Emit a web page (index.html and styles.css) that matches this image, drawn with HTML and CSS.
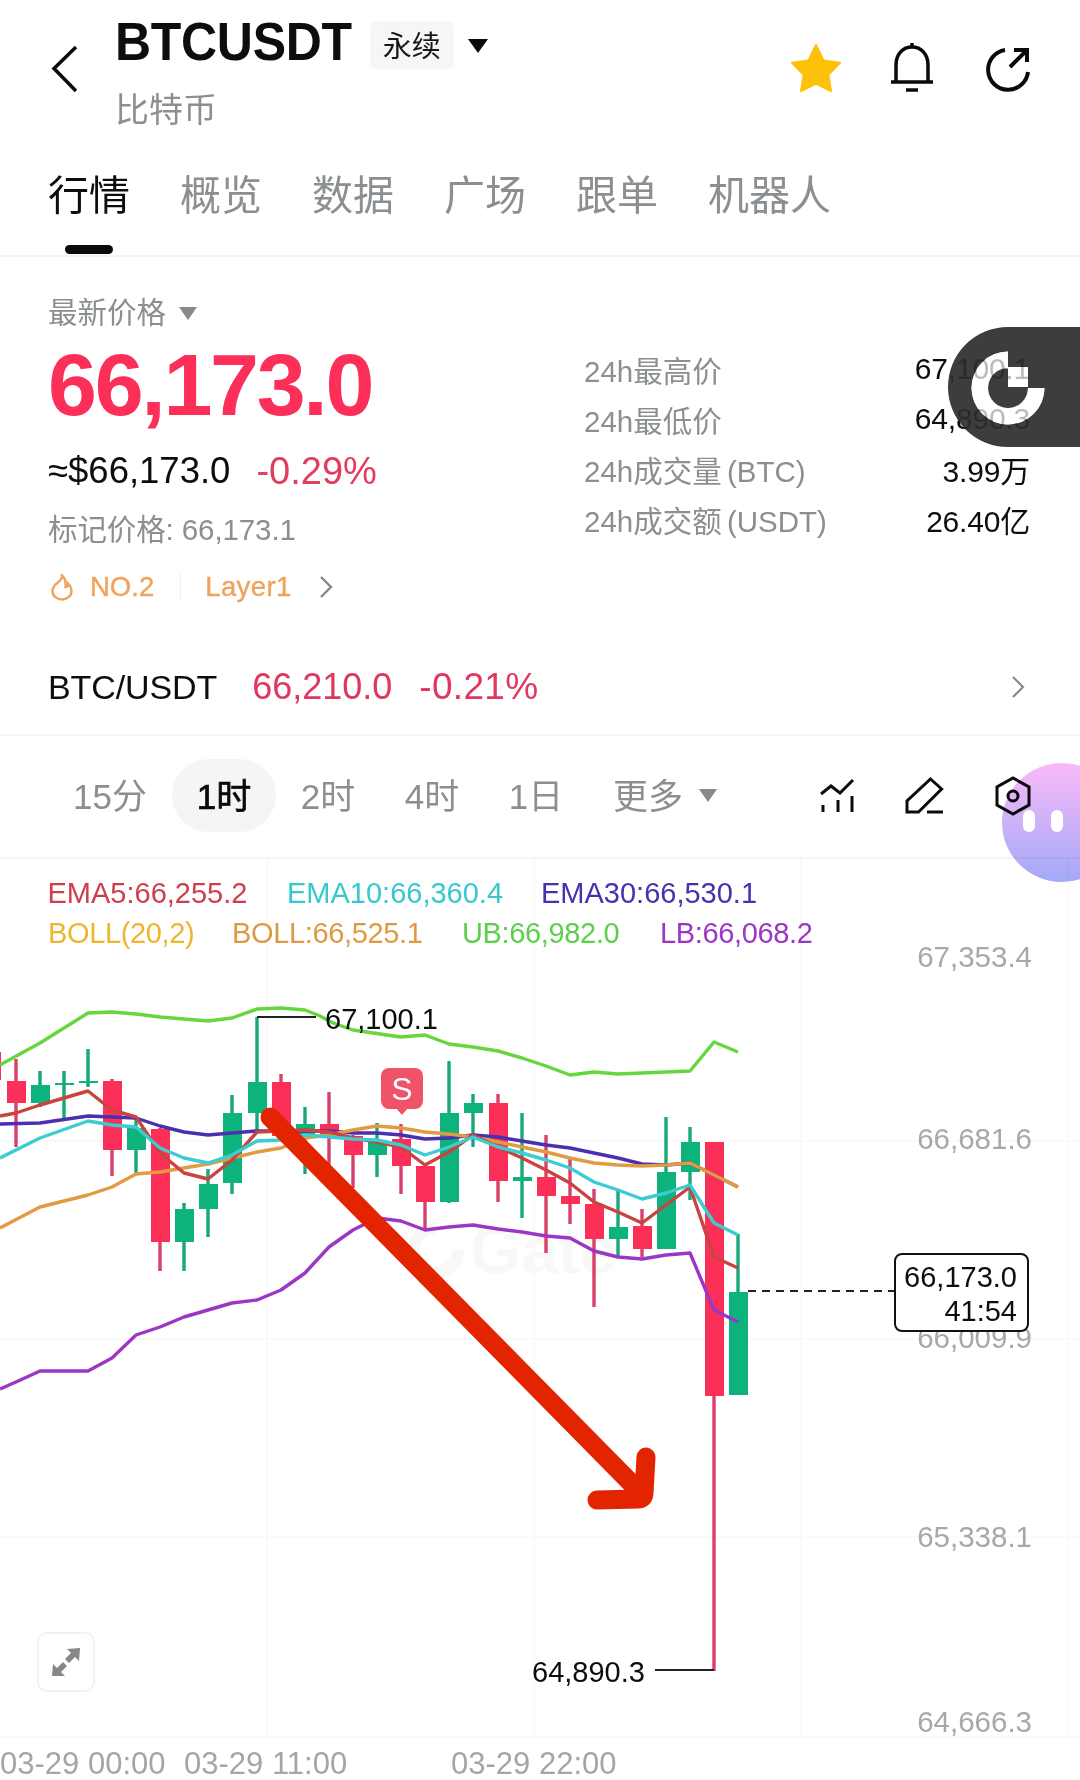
FILE: index.html
```html
<!DOCTYPE html>
<html lang="zh">
<head>
<meta charset="utf-8">
<title>BTCUSDT</title>
<link rel="stylesheet" href="styles.css">
</head>
<body>
<div class="app">
  <header class="topbar">
    <svg class="back" width="28" height="48" viewBox="0 0 28 48"><path class="ic" d="M25 2 3 23.500 25 46"/></svg>
    <div class="title-block">
      <div class="title-row">
        <h1 class="symbol">BTCUSDT</h1>
        <span class="pill-type">永续</span>
        <i class="caret caret-black"></i>
      </div>
      <div class="coin-name">比特币</div>
    </div>
    <div class="top-icons">
      <svg class="star" width="52" height="50" viewBox="0 0 52 50"><path d="M26 2 33.500 17.500 50 19.800 38.300 31.800 41 48 26 40.500 11 48 13.700 31.800 2 19.800 18.500 17.500Z"/></svg>
      <svg class="bell" width="46" height="52" viewBox="0 0 46 52"><path class="ic" d="M7 41V24C7 13 14 6 23 6S39 13 39 24V41M2 41H44M17 49H29M23 2V6"/></svg>
      <svg class="share" width="50" height="48" viewBox="0 0 50 48"><path class="ic ic-bold" d="M24 4A20 20 0 1 0 47 26M29 21 45 5M33 4H46V16"/></svg>
    </div>
  </header>

  <nav class="tabs">
    <a class="tab tab-active">行情</a>
    <a class="tab">概览</a>
    <a class="tab">数据</a>
    <a class="tab">广场</a>
    <a class="tab">跟单</a>
    <a class="tab">机器人</a>
  </nav>

  <section class="market">
    <div class="stats">
      <div class="stats-left">
        <div class="latest"><span>最新价格</span><i class="caret caret-gray"></i></div>
        <div class="price">66,173.0</div>
        <div class="usd-row"><span class="usd">≈$66,173.0</span><span class="chg">-0.29%</span></div>
        <div class="mark">标记价格: 66,173.1</div>
        <div class="tags">
          <svg class="flame" width="22" height="27" viewBox="0 0 22 27"><path d="M11 1.500C12 6 7 8 4 11 1.500 13.500 1.500 16 1.500 17.500 1.500 22 6 25.500 11 25.500S20.500 22 20.500 17.500C20.500 14 19 11.500 17 9.500 17 12 15.500 13 14.500 13 15 8.500 14 4 11 1.500Z"/></svg>
          <span class="tag-text">NO.2</span>
          <span class="tag-sep"></span>
          <span class="tag-text">Layer1</span>
          <svg class="tag-chev" width="14" height="24" viewBox="0 0 14 24"><path d="M2 2 12 12 2 22"/></svg>
        </div>
      </div>
      <dl class="stats-right">
        <div class="kv"><dt>24h最高价</dt><dd>67,100.1</dd></div>
        <div class="kv"><dt>24h最低价</dt><dd>64,890.3</dd></div>
        <div class="kv"><dt>24h成交量 (BTC)</dt><dd>3.99万</dd></div>
        <div class="kv"><dt>24h成交额 (USDT)</dt><dd>26.40亿</dd></div>
      </dl>
    </div>
    <div class="spot">
      <span class="spot-name">BTC/USDT</span>
      <span class="spot-price">66,210.0</span>
      <span class="spot-chg">-0.21%</span>
      <svg class="spot-chev" width="14" height="24" viewBox="0 0 14 24"><path d="M2 2 12 12 2 22"/></svg>
    </div>
  </section>

  <div class="toolbar">
    <span class="period period-first">15分</span>
    <span class="period period-active">1时</span>
    <span class="period">2时</span>
    <span class="period">4时</span>
    <span class="period">1日</span>
    <span class="period period-more">更多</span>
    <i class="caret caret-gray"></i>
    <div class="tools">
      <svg width="36" height="36" viewBox="0 0 36 36"><path class="tool" d="M2 16 12 8 21 15 34 2M4 27V34M19 22V34M33 18V34"/></svg>
      <svg width="40" height="38" viewBox="0 0 40 38"><path class="tool" d="M25.500 2 36.600 12 13.500 35H2V24ZM22 35H38"/></svg>
      <svg width="36" height="40" viewBox="0 0 36 40"><path class="tool" d="M18 2 34 11V29L18 38 2 29V11Z"/><circle class="tool" cx="18" cy="20" r="5"/></svg>
    </div>
  </div>

  <svg class="chart" width="1080" height="921" viewBox="0 859 1080 921">
    <g class="grid">
      <path d="M267 859V1737M534 859V1737M801 859V1737M1068 859V1737"/>
      <path d="M0 1141H1080M0 1339H1080M0 1537H1080M0 1737H1080"/>
    </g>
    <g class="wm">
      <path class="wm-ring" d="M436 1228A22 22 0 1 0 458 1250"/>
      <text x="470" y="1273" class="wm-text">Gate</text>
    </g>

    <g class="legend">
      <text x="47.500" y="903" class="c-ema5">EMA5:66,255.2</text>
      <text x="287" y="903" class="c-ema10">EMA10:66,360.4</text>
      <text x="541" y="903" class="c-ema30">EMA30:66,530.1</text>
      <text x="48" y="943" class="c-boll2 tight">BOLL(20,2)</text>
      <text x="232" y="943" class="c-boll tight">BOLL:66,525.1</text>
      <text x="462" y="943" class="c-ub tight">UB:66,982.0</text>
      <text x="660" y="943" class="c-lb tight">LB:66,068.2</text>
    </g>
    <g class="axis">
      <text x="1032" y="967">67,353.4</text>
      <text x="1032" y="1149">66,681.6</text>
      <text x="1032" y="1348">66,009.9</text>
      <text x="1032" y="1547">65,338.1</text>
      <text x="1032" y="1732">64,666.3</text>
    </g>
    <g class="axis-x">
      <text x="0" y="1774">03-29 00:00</text>
      <text x="184" y="1774">03-29 11:00</text>
      <text x="451" y="1774">03-29 22:00</text>
    </g>

    <g class="candles">
      <path class="w-dn" d="M-8 1040V1090"/><rect class="dn" x="-18" y="1052" width="19" height="28"/>
      <path class="w-dn" d="M16 1059V1147"/><rect class="dn" x="7" y="1081" width="19" height="22"/>
      <path class="w-up" d="M40 1071V1107"/><rect class="up" x="31" y="1085" width="19" height="18"/>
      <path class="w-up" d="M64 1071V1118"/><rect class="up" x="55" y="1083" width="19" height="2"/>
      <path class="w-up" d="M88 1049V1087"/><rect class="up" x="79" y="1081" width="19" height="2"/>
      <path class="w-dn" d="M112 1079V1176"/><rect class="dn" x="103" y="1081" width="19" height="69"/>
      <path class="w-up" d="M136 1118V1174"/><rect class="up" x="127" y="1128" width="19" height="22"/>
      <path class="w-dn" d="M160 1128V1271"/><rect class="dn" x="151" y="1129" width="19" height="113"/>
      <path class="w-up" d="M184 1203V1271"/><rect class="up" x="175" y="1209" width="19" height="33"/>
      <path class="w-up" d="M208 1169V1237"/><rect class="up" x="199" y="1184" width="19" height="25"/>
      <path class="w-up" d="M232 1095V1194"/><rect class="up" x="223" y="1113" width="19" height="70"/>
      <path class="w-up" d="M257 1017V1130"/><rect class="up" x="248" y="1082" width="19" height="31"/>
      <path class="w-dn" d="M281 1074V1136"/><rect class="dn" x="272" y="1082" width="19" height="54"/>
      <path class="w-up" d="M305 1107V1174"/><rect class="up" x="296" y="1124" width="19" height="14"/>
      <path class="w-dn" d="M329 1092V1165"/><rect class="dn" x="320" y="1124" width="19" height="10"/>
      <path class="w-dn" d="M353 1135V1188"/><rect class="dn" x="344" y="1136" width="19" height="19"/>
      <path class="w-up" d="M377 1123V1177"/><rect class="up" x="368" y="1140" width="19" height="15"/>
      <path class="w-dn" d="M401 1124V1194"/><rect class="dn" x="392" y="1139" width="19" height="27"/>
      <path class="w-dn" d="M425 1166V1230"/><rect class="dn" x="416" y="1166" width="19" height="36"/>
      <path class="w-up" d="M449 1061V1203"/><rect class="up" x="440" y="1113" width="19" height="89"/>
      <path class="w-up" d="M473 1094V1147"/><rect class="up" x="464" y="1103" width="19" height="10"/>
      <path class="w-dn" d="M498 1094V1202"/><rect class="dn" x="489" y="1103" width="19" height="78"/>
      <path class="w-up" d="M522 1113V1218"/><rect class="up" x="513" y="1177" width="19" height="4"/>
      <path class="w-dn" d="M546 1135V1253"/><rect class="dn" x="537" y="1177" width="19" height="19"/>
      <path class="w-dn" d="M570 1158V1224"/><rect class="dn" x="561" y="1196" width="19" height="8"/>
      <path class="w-dn" d="M594 1189V1307"/><rect class="dn" x="585" y="1204" width="19" height="35"/>
      <path class="w-up" d="M618 1190V1257"/><rect class="up" x="609" y="1227" width="19" height="12"/>
      <path class="w-dn" d="M642 1209V1257"/><rect class="dn" x="633" y="1226" width="19" height="23"/>
      <path class="w-up" d="M666 1117V1249"/><rect class="up" x="657" y="1172" width="19" height="77"/>
      <path class="w-up" d="M690 1127V1200"/><rect class="up" x="681" y="1142" width="19" height="30"/>
      <path class="w-dn" d="M714 1142V1671"/><rect class="dn" x="705" y="1142" width="19" height="254"/>
      <path class="w-up" d="M738 1234V1395"/><rect class="up" x="729" y="1292" width="19" height="103"/>
    </g>

    <g class="lines">
      <polyline class="l-ub" points="0,1065 40,1043 64,1028 88,1013 112,1012 136,1014 160,1017 184,1019 208,1021 232,1018 257,1009 281,1008 305,1010 320,1016 333,1023 353,1030 380,1034 401,1037 425,1035 449,1044 473,1047 498,1051 522,1058 546,1066 570,1075 594,1072 618,1074 642,1073 666,1072 690,1071 714,1042 738,1052"/>
      <polyline class="l-lb" points="0,1389 16,1382 40,1371 88,1371 112,1358 136,1335 160,1327 184,1317 208,1310 232,1303 257,1300 281,1290 305,1273 329,1247 353,1230 377,1218 401,1221 425,1230 449,1227 473,1225 498,1229 522,1232 546,1236 570,1238 594,1251 618,1257 642,1259 666,1255 690,1253 714,1310 738,1322"/>
      <polyline class="l-ema30" points="0,1124 40,1123 88,1116 112,1117 136,1118 160,1126 184,1132 208,1135 232,1133 257,1131 281,1131 305,1131 329,1131 353,1133 377,1133 401,1135 425,1139 449,1138 473,1135 498,1137 522,1141 546,1145 570,1148 594,1153 618,1158 642,1164 666,1165 690,1163 714,1175 738,1187"/>
      <polyline class="l-boll" points="0,1228 40,1207 88,1195 112,1187 136,1174 160,1172 184,1168 208,1164 232,1158 257,1152 281,1148 305,1138 329,1135 353,1130 377,1126 401,1128 425,1132 449,1134 473,1137 498,1142 522,1147 546,1152 570,1158 594,1163 618,1165 642,1166 666,1165 690,1163 714,1175 738,1187"/>
      <polyline class="l-ema5" points="0,1116 16,1113 40,1105 64,1098 88,1091 112,1110 136,1117 160,1153 184,1173 208,1179 232,1160 257,1132 281,1131 305,1130 329,1132 353,1138 377,1142 401,1147 425,1165 449,1152 473,1135 498,1147 522,1158 546,1170 570,1183 594,1202 618,1212 642,1223 666,1205 690,1187 714,1257 738,1268"/>
      <polyline class="l-ema10" points="0,1158 40,1138 88,1121 112,1125 136,1127 160,1148 184,1158 208,1163 232,1155 257,1141 281,1140 305,1135 329,1137 353,1139 377,1140 401,1145 425,1155 449,1147 473,1137 498,1147 522,1153 546,1160 570,1168 594,1182 618,1190 642,1199 666,1193 690,1185 714,1223 738,1235"/>
    </g>

    <path class="mark-line" d="M257 1017H316M655 1670H714"/>
    <text x="325" y="1029" class="extreme">67,100.1</text>
    <text x="532" y="1682" class="extreme">64,890.3</text>
    <path class="dash" d="M748 1291H895"/>

    <rect class="badge" x="381" y="1068" width="42" height="41" rx="8"/>
    <path class="badge" d="M396 1108H408L402 1115Z"/>
    <text x="402" y="1100" class="badge-s">S</text>

    <path class="arrow" d="M270 1117 636 1488"/>
    <path class="arrow-head" d="M597 1500 638 1499C642 1499 644 1497 644 1493L646 1457"/>

    <rect class="tag-box" x="895" y="1254" width="133" height="77" rx="7"/>
    <text x="1017" y="1287" class="tag-val">66,173.0</text>
    <text x="1017" y="1321" class="tag-val">41:54</text>

    <rect class="expand" x="38" y="1633" width="56" height="58" rx="9"/>
    <path class="expand-ic" d="M80 1648 67 1649 71 1653 65 1659 69 1663 75 1657 79 1661ZM52 1676 65 1676 61 1672 67 1666 63 1662 57 1668 53 1664Z"/>
  </svg>

  <svg class="float-logo" width="132" height="120" viewBox="0 0 132 120">
    <path class="plate" fill-rule="evenodd" d="M60 0H132V120H60A60 60 0 0 1 60 0ZM60 24.500A36.500 36.500 0 1 0 96.500 61H80A20 20 0 1 1 60 41ZM60 40H80V60H60Z"/>
    <path class="logo-mark" d="M60 24.500A36.500 36.500 0 1 0 96.500 61H80A20 20 0 1 1 60 41ZM60 40H80V60H60Z"/>
  </svg>
  <div class="float-bot"><span></span><span></span></div>
</div>
</body>
</html>
```
FILE: styles.css
```css
* { box-sizing: border-box; }
html, body { margin: 0; padding: 0; background: #fff; }
body { font-family: "Liberation Sans", "Noto Sans CJK SC", sans-serif; color: #0b0d0f; }

.app { position: relative; width: 1080px; height: 1780px; overflow: hidden; background: #fff; }

.ic { fill: none; stroke: #0a0a0a; stroke-width: 3.500; }
.ic-bold { stroke-width: 4; }

/* header */
.topbar { display: flex; height: 150px; padding-left: 51px; }
.back { margin-top: 45px; flex: none; }
.title-block { margin-left: 36px; }
.title-row { display: flex; align-items: center; height: 72px; margin-top: 7px; }
.symbol { margin: -3px 0 0; font-size: 50px; line-height: 60px; font-weight: 700; letter-spacing: -.3px; transform: scaleY(1.08); transform-origin: center; }
.pill-type { display: flex; align-items: center; justify-content: center; width: 84px; height: 48px; margin: 4px 0 0 18px; padding-bottom: 3px; border-radius: 7px; background: #f5f6f7; font-size: 29px; color: #16181a; }
.caret { display: block; width: 0; height: 0; border-style: solid; border-color: transparent; }
.caret-black { margin: 6px 0 0 14px; border-width: 14px 10px 0; border-top-color: #0a0a0a; }
.caret-gray { border-width: 13px 9px 0; border-top-color: #87898b; }
.coin-name { margin-top: 8px; font-size: 34px; line-height: 46px; color: #8b8f92; }
.top-icons { display: flex; align-items: flex-start; margin-left: auto; padding-right: 49px; }
.star { margin-top: 43px; fill: #ffc107; stroke: #ffc107; stroke-width: 2; stroke-linejoin: round; }
.bell { margin-top: 41px; margin-left: 47px; }
.share { margin-top: 46px; margin-left: 46px; }

/* tabs */
.tabs { display: flex; gap: 50px; height: 107px; padding: 24px 0 0 48px; border-bottom: 2px solid #f4f4f4; }
.tab { position: relative; font-size: 41px; line-height: 44px; color: #8b8f92; }
.tab-active { color: #0b0d0f; }
.tab-active::after { content: ""; position: absolute; left: 17px; top: 71px; width: 48px; height: 9px; border-radius: 5px; background: #0a0a0a; }

/* market */
.market { padding: 38px 50px 27px 48px; border-bottom: 2px solid #f5f5f5; }
.stats { display: flex; }
.stats-left { width: 536px; flex: none; }
.latest { display: flex; align-items: center; gap: 13px; font-size: 29.500px; line-height: 36px; color: #8b8f92; }
.price { margin-top: 8px; font-size: 88px; line-height: 92px; font-weight: 700; letter-spacing: -2.300px; color: #fb2f58; }
.usd-row { display: flex; margin-top: 18px; font-size: 36.500px; line-height: 44px; }
.usd { color: #0b0d0f; }
.chg { margin-left: 26px; font-size: 38px; color: #e33c5f; }
.mark { margin-top: 19px; font-size: 29.500px; line-height: 36px; letter-spacing: -.1px; color: #8b8f92; }
.tags { display: flex; align-items: center; height: 36px; margin-top: 21px; font-size: 27.500px; color: #f0a35e; }
.flame { margin-left: 3px; fill: none; stroke: #f0a35e; stroke-width: 2.400; }
.tag-text { margin-left: 17px; -webkit-text-stroke: .4px #f0a35e; }
.tag-sep { width: 1px; height: 30px; margin-left: 26px; background: #f3f1ee; }
.tag-sep + .tag-text { margin-left: 24px; letter-spacing: .4px; }
.tag-chev { margin-left: 27px; fill: none; stroke: #85888a; stroke-width: 2.400; }
.stats-right { flex: 1; margin: 49px 0 0; }
.kv { display: flex; justify-content: space-between; height: 50px; align-items: center; font-size: 29.500px; }
.kv dt { word-spacing: -3px; color: #8b8f92; }
.kv dd { margin: 0; font-size: 30px; letter-spacing: -.2px; color: #0b0d0f; }
.spot { display: flex; align-items: center; height: 40px; margin-top: 62px; }
.spot-name { font-size: 34px; letter-spacing: -.1px; }
.spot-price { margin-left: 35px; font-size: 36px; color: #e0375f; }
.spot-chg { margin-left: 27px; font-size: 37px; letter-spacing: .3px; color: #e0375f; }
.spot-chev { margin-left: auto; margin-right: 5px; fill: none; stroke: #85888a; stroke-width: 2.200; }

/* toolbar */
.toolbar { display: flex; align-items: center; height: 123px; padding: 0 49px 2px 58px; border-bottom: 2px solid #f5f5f5; }
.period { display: flex; align-items: center; justify-content: center; width: 104px; height: 73px; padding-bottom: 4px; font-size: 35px; color: #8b8f92; }
.period-first { margin-right: 10px; }
.period-active { border-radius: 37px; background: #f5f5f5; color: #0a0a0a; -webkit-text-stroke: .7px #0a0a0a; }
.period-more { margin-left: 8px; margin-right: -1px; }
.tools { display: flex; align-items: center; gap: 50px; margin-left: auto; }
.tool { fill: none; stroke: #0c0c0c; stroke-width: 3; }

/* chart */
.chart { display: block; }
.grid path { fill: none; stroke: #f9f9f9; stroke-width: 1.500; }
.wm-ring { fill: none; stroke: #f7f8f8; stroke-width: 12; }
.wm-text { font-size: 66px; font-weight: 700; fill: #f7f8f8; }
.legend text { font-size: 29px; }
.legend .tight { letter-spacing: -.35px; }
.c-ema5 { fill: #cf3f4b; }
.c-ema10 { fill: #35c9cf; }
.c-ema30 { fill: #4a2fae; }
.c-boll2 { fill: #eeb62f; }
.c-boll { fill: #dd9a45; }
.c-ub { fill: #5bd04a; }
.c-lb { fill: #9c36c4; }
.axis text { font-size: 29.500px; fill: #a6a8aa; text-anchor: end; }
.axis-x text { font-size: 31px; fill: #a3a6a8; }
.up { fill: #0db27c; }
.dn { fill: #fb2f58; }
.w-up { stroke: #17a87a; stroke-width: 3.400; fill: none; }
.w-dn { stroke: #d93f68; stroke-width: 3.400; fill: none; }
.lines polyline { fill: none; stroke-width: 3.400; stroke-linejoin: round; }
.l-ub { stroke: #66d63f; }
.l-lb { stroke: #9c36c4; }
.l-ema30 { stroke: #4a2fae; }
.l-boll { stroke: #e29a43; }
.l-ema5 { stroke: #c9443f; }
.l-ema10 { stroke: #3ccdd0; }
.mark-line { fill: none; stroke: #222; stroke-width: 2; }
.extreme { font-size: 29px; fill: #0b0d0f; }
.dash { fill: none; stroke: #222; stroke-width: 2; stroke-dasharray: 8 6; }
.badge { fill: #ee5368; }
.badge-s { font-size: 32px; fill: #fff; text-anchor: middle; }
.arrow { fill: none; stroke: #e32400; stroke-width: 19; stroke-linecap: round; }
.arrow-head { fill: none; stroke: #e32400; stroke-width: 19; stroke-linecap: round; }
.tag-box { fill: #fff; stroke: #111; stroke-width: 2; }
.tag-val { font-size: 29px; fill: #0b0d0f; text-anchor: end; }
.expand { fill: #fff; stroke: #f2f2f2; stroke-width: 2; }
.expand-ic { fill: #85888a; }

/* floating overlays */
.float-logo { position: absolute; right: 0; top: 327px; }
.plate { fill: rgba(44, 44, 44, .92); }
.logo-mark { fill: rgba(255, 255, 255, .72); }
.float-bot { position: absolute; right: -42px; top: 763px; display: flex; gap: 16px; width: 120px; height: 119px; padding: 47px 0 0 21px; border-radius: 50%; background: linear-gradient(180deg, #f9b9f8 0%, #a3a9f9 100%); mix-blend-mode: multiply; }
.float-bot span { width: 12px; height: 22px; border-radius: 6px; background: #fff; }
```
